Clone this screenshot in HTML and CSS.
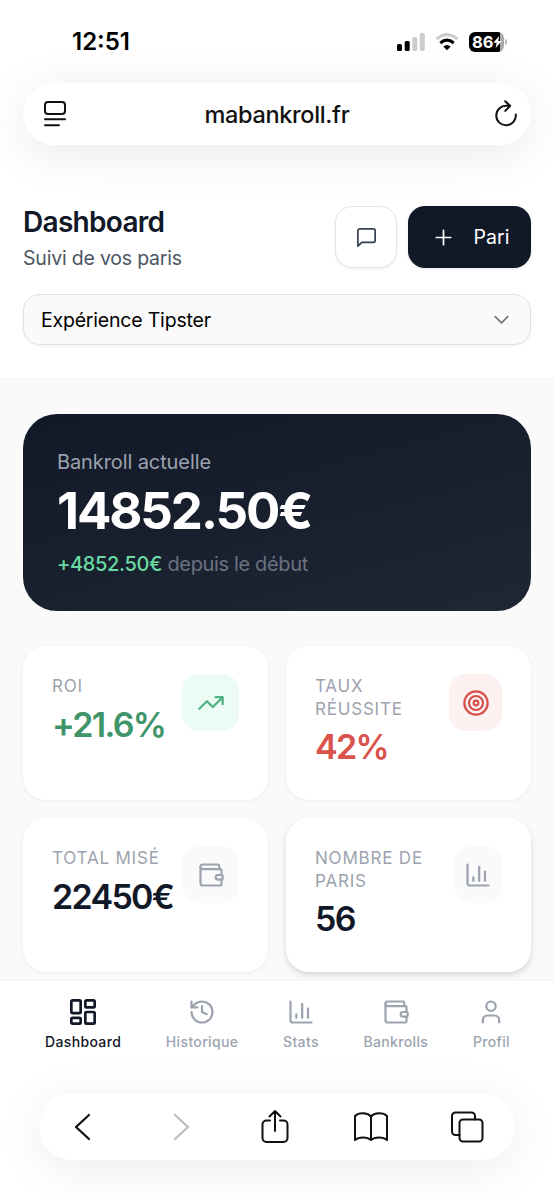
FILE: index.html
```html
<!DOCTYPE html>
<html lang="fr">
<head>
    <meta charset="UTF-8">
    <meta name="viewport" content="width=device-width, initial-scale=1.0">
    <title>Dashboard</title>
    <link rel="stylesheet" href="styles.css">
</head>
<body>

    <svg class="sprite" width="0" height="0">
        <symbol id="wallet" viewBox="0 0 24 24">
            <path d="M19 7V4a1 1 0 0 0-1-1H5a2 2 0 0 0 0 4h15a1 1 0 0 1 1 1v4h-3a2 2 0 0 0 0 4h3a1 1 0 0 0 1-1v-2a1 1 0 0 0-1-1"/>
            <path d="M3 5v14a2 2 0 0 0 2 2h15a1 1 0 0 0 1-1v-4"/>
        </symbol>
        <symbol id="chart" viewBox="0 0 24 24">
            <path d="M3 3v16a2 2 0 0 0 2 2h16M18 17V9M13 17V5M8 17v-3"/>
        </symbol>
    </svg>

    <div class="top">
        <div class="status">
            <span class="time">12:51</span>
            <div class="status-icons">
                <svg width="28" height="18" viewBox="0 0 28 18">
                    <rect x="0" y="11" width="5" height="7" rx="1.6"/>
                    <rect x="7.7" y="8" width="5" height="10" rx="1.6"/>
                    <rect x="15.3" y="4" width="5" height="14" rx="1.6" fill="#ccc"/>
                    <rect x="22.8" y="0" width="5" height="18" rx="1.6" fill="#ccc"/>
                </svg>
                <svg width="24" height="18" viewBox="0 0 24 18">
                    <path d="M1.5 6.2Q12-3 22.5 6.2" fill="none" stroke="#ccc" stroke-width="3.1"/>
                    <path d="M5.3 10Q12 4.2 18.7 10" fill="none" stroke="#000" stroke-width="3.1"/>
                    <path d="M8.3 13.4Q12 10.4 15.7 13.4L12 17.3z"/>
                </svg>
                <div class="battery">
                    <span>86</span>
                    <svg width="9" height="12" viewBox="0 0 9 12"><path d="M6.2 0L.3 6.8h3.3L2.7 12 8.7 5H5.3z" fill="#fff"/></svg>
                </div>
            </div>
        </div>
        <div class="url-bar">
            <svg class="ink" width="24" height="28" viewBox="0 0 24 28">
                <rect x="2" y="2" width="20" height="12" rx="3"/>
                <path d="M2 19.2h20M2 25.2h14"/>
            </svg>
            <span>mabankroll.fr</span>
            <svg class="ink" width="24" height="28" viewBox="0 0 24 28">
                <path d="M21.8 14.5a9.8 9.8 0 1 1-9.3-8.8h3.6M11.2 1.2l5 4.7-5 5"/>
            </svg>
        </div>
    </div>

    <header>
        <div class="title-row">
            <div>
                <h1>Dashboard</h1>
                <p class="subtitle">Suivi de vos paris</p>
            </div>
            <div class="actions">
                <button class="btn-chat">
                    <svg width="23" height="23" viewBox="0 0 24 24"><path d="M21 15a2 2 0 0 1-2 2H7l-4 4V5a2 2 0 0 1 2-2h14a2 2 0 0 1 2 2z"/></svg>
                </button>
                <button class="btn-pari">
                    <svg width="23" height="23" viewBox="0 0 24 24"><path d="M4.5 12h15M12 4.5v15"/></svg>
                    <span>Pari</span>
                </button>
            </div>
        </div>
        <div class="select">
            <span>Expérience Tipster</span>
            <svg width="23" height="23" viewBox="0 0 24 24"><path d="M5.5 9l6.5 6.5L18.5 9"/></svg>
        </div>
    </header>

    <main>
        <section class="hero">
            <p class="hero-label">Bankroll actuelle</p>
            <p class="hero-value">14852.50€</p>
            <p class="hero-diff"><span class="gain">+4852.50€</span> <span class="since">depuis le début</span></p>
        </section>

        <section class="cards">
            <div class="card">
                <div>
                    <p class="label">ROI</p>
                    <p class="value green">+21.6%</p>
                </div>
                <div class="badge badge-green">
                    <svg width="28" height="28" viewBox="0 0 24 24"><path d="M16 7h6v6M22 7l-8.5 8.5-5-5L2 17"/></svg>
                </div>
            </div>
            <div class="card">
                <div>
                    <p class="label">TAUX<br>RÉUSSITE</p>
                    <p class="value red">42%</p>
                </div>
                <div class="badge badge-red">
                    <svg width="28" height="28" viewBox="0 0 24 24"><circle cx="12" cy="12" r="10"/><circle cx="12" cy="12" r="6"/><circle cx="12" cy="12" r="2"/></svg>
                </div>
            </div>
            <div class="card">
                <div>
                    <p class="label">TOTAL MISÉ</p>
                    <p class="value">22450€</p>
                </div>
                <div class="badge">
                    <svg width="28" height="28"><use href="#wallet"/></svg>
                </div>
            </div>
            <div class="card card-active">
                <div>
                    <p class="label">NOMBRE DE<br>PARIS</p>
                    <p class="value">56</p>
                </div>
                <div class="badge badge-small">
                    <svg width="28" height="28"><use href="#chart"/></svg>
                </div>
            </div>
        </section>
    </main>

    <nav>
        <a class="active">
            <svg width="28" height="28" viewBox="0 0 24 24"><rect x="2" y="2" width="8" height="11" rx="1"/><rect x="14" y="2" width="8" height="6" rx="1"/><rect x="14" y="12" width="8" height="10" rx="1"/><rect x="2" y="17" width="8" height="5" rx="1"/></svg>
            <span>Dashboard</span>
        </a>
        <a>
            <svg width="28" height="28" viewBox="0 0 24 24"><path d="M3 12a9 9 0 1 0 9-9 9.75 9.75 0 0 0-6.74 2.74L3 8"/><path d="M3 3v5h5M12 7v5l4 2"/></svg>
            <span>Historique</span>
        </a>
        <a>
            <svg width="28" height="28"><use href="#chart"/></svg>
            <span>Stats</span>
        </a>
        <a>
            <svg width="28" height="28"><use href="#wallet"/></svg>
            <span>Bankrolls</span>
        </a>
        <a>
            <svg width="28" height="28" viewBox="0 0 24 24"><path d="M19 21v-2a4 4 0 0 0-4-4H9a4 4 0 0 0-4 4v2"/><circle cx="12" cy="7" r="4"/></svg>
            <span>Profil</span>
        </a>
    </nav>

    <div class="toolbar-wrap">
        <div class="toolbar">
            <svg class="ink bold" width="36" height="36" viewBox="0 0 36 36"><path d="M24 6L11 18l13 12"/></svg>
            <svg class="ink bold dim" width="36" height="36" viewBox="0 0 36 36"><path d="M14 6l13 12-13 12"/></svg>
            <svg class="ink" width="36" height="36" viewBox="0 0 36 36"><path d="M13 11.5H9.5a4 4 0 0 0-4 4V29a4 4 0 0 0 4 4h17a4 4 0 0 0 4-4V15.5a4 4 0 0 0-4-4H23M18 22V2.500M12.5 7.500L18 2l5.500 5.500"/></svg>
            <svg class="ink" width="36" height="36" viewBox="0 0 36 36"><path d="M18 7.500C14.500 3.500 6 3 2 7v24c4-3.500 12-3.500 16 0 4-3.500 12-3.500 16 0V7c-4-4-12.500-3.500-16 .5zM18 7.500V31"/></svg>
            <svg class="ink" width="36" height="36" viewBox="0 0 36 36"><rect x="10.5" y="10.5" width="23" height="22" rx="3.5"/><path d="M10.5 26h-4A3.500 3.500 0 0 1 3 22.500V7a3.500 3.500 0 0 1 3.500-3.500h16A3.500 3.500 0 0 1 26 7v3.500"/></svg>
        </div>
    </div>

</body>
</html>
```

FILE: styles.css
```css
* { box-sizing: border-box; margin: 0; padding: 0; }
body { width: 554px; height: 1200px; overflow: hidden; background: #fff; font-family: Inter, sans-serif; color: #111827; display: flex; flex-direction: column; }
svg { flex-shrink: 0; }
.sprite { position: absolute; }
button { border: none; font-family: inherit; }

.ink { fill: none; stroke: #111; stroke-width: 2; stroke-linecap: round; stroke-linejoin: round; }
.bold { stroke-width: 2.3; }
.dim { stroke: #bbb; }

/* status bar and address bar */
.top { height: 206px; flex-shrink: 0; overflow: hidden; background: #fff; }
.status { height: 83px; padding: 0 50px 0 72px; display: flex; align-items: center; justify-content: space-between; }
.time { font-size: 24px; font-weight: 600; color: #000; }
.status-icons { display: flex; align-items: center; gap: 10px; }
.battery { position: relative; width: 35px; height: 20px; border-radius: 6px; background: linear-gradient(90deg, #000 31px, #aaa 31px); display: flex; align-items: center; padding-left: 3px; color: #fff; font-size: 16.5px; font-weight: 700; }
.battery::after { content: ""; position: absolute; left: 36px; top: 7px; width: 2px; height: 6px; border-radius: 0 2px 2px 0; background: #bbb; }
.url-bar { height: 62px; margin: 0 23px; padding: 0 13px 0 20px; border-radius: 31px; background: #fff; box-shadow: 0 8px 50px rgba(0, 0, 0, 0.09); display: flex; align-items: center; justify-content: space-between; font-size: 23.5px; font-weight: 450; color: #111; letter-spacing: -0.35px; }
.url-bar span { margin-left: -7px; }

/* page header */
header { height: 173px; flex-shrink: 0; padding: 0 23px; border-bottom: 1px solid #f4f4f5; }
.title-row { display: flex; justify-content: space-between; height: 62px; }
h1 { font-size: 28px; line-height: 32px; font-weight: 600; letter-spacing: -0.7px; }
.subtitle { margin-top: 6px; font-size: 19.5px; line-height: 28px; color: #4b5563; letter-spacing: -0.2px; }
.actions { display: flex; gap: 11px; }
.actions button { height: 62px; border-radius: 17px; display: flex; align-items: center; justify-content: center; }
.actions svg, .select svg { fill: none; stroke: currentColor; stroke-width: 1.8; stroke-linecap: round; stroke-linejoin: round; }
.actions .btn-chat { width: 62px; background: #fff; border: 1px solid #e2e4ea; color: #374151; box-shadow: 0 1px 3px rgba(0, 0, 0, 0.07); }
.btn-pari { width: 123px; padding-left: 2px; gap: 19px; background: #111827; color: #fff; font-size: 19.5px; box-shadow: 0 1px 3px rgba(0, 0, 0, 0.1); }
.select { margin-top: 26px; height: 51px; padding: 0 17px; border: 1px solid #dfe1e8; border-radius: 17px; background: #fafafb; box-shadow: 0 1px 3px rgba(0, 0, 0, 0.06); display: flex; align-items: center; justify-content: space-between; font-size: 19.5px; letter-spacing: -0.2px; color: #000; }
.select svg { color: #777; }

/* bankroll + stats */
main { height: 601px; flex-shrink: 0; overflow: hidden; padding: 35px 23px 0; background: #fafafb; }
.hero { height: 197px; padding: 34px; border-radius: 34px; background: linear-gradient(165deg, #111827, #1f2735); }
.hero-label { font-size: 20px; line-height: 28px; color: #9ca3af; letter-spacing: -0.1px; }
.hero-value { margin-top: 6px; font-size: 51px; line-height: 57px; font-weight: 700; color: #fff; letter-spacing: -2.1px; }
.hero-diff { margin-top: 11px; font-size: 20px; line-height: 28px; letter-spacing: -0.35px; white-space: nowrap; }
.gain { color: #68dba2; font-weight: 500; }
.since { color: #6b7280; }

.cards { margin-top: 35px; display: grid; grid-template-columns: 245px 245px; justify-content: space-between; row-gap: 18px; }
.card { height: 154px; padding: 28px 29px 0; border-radius: 23px; background: #fff; box-shadow: 0 1px 4px rgba(30, 30, 90, 0.06); display: flex; justify-content: space-between; }
.card-active { box-shadow: 0 3px 6px rgba(0, 0, 0, 0.14); }
.label { margin-top: 1px; font-size: 17px; line-height: 22.5px; color: #9ca3af; letter-spacing: 0.8px; white-space: nowrap; }
.value { font-size: 34px; line-height: 40px; margin-top: 7px; font-weight: 600; letter-spacing: -1.7px; white-space: nowrap; }
.green { color: #3f946a; }
.red { color: #d9524c; }
.badge { width: 57px; height: 57px; margin-left: -20px; border-radius: 17px; background: #fafafa; color: #9ca3af; display: flex; align-items: center; justify-content: center; }
.badge-green { background: #ecfbf4; color: #4fb184; }
.badge-red { width: 53px; background: #fcf0f0; color: #d6504c; }
.badge-small { width: 48px; }
.badge svg, nav svg { fill: none; stroke: currentColor; stroke-width: 1.9; stroke-linecap: round; stroke-linejoin: round; }

/* tab bar */
nav { height: 76px; flex-shrink: 0; padding: 17px 44px 0 45px; border-top: 1px solid #f4f4f5; display: flex; justify-content: space-between; }
nav a { display: flex; flex-direction: column; align-items: center; color: #9ca3af; font-size: 14px; font-weight: 450; letter-spacing: 0.35px; }
nav span { margin-top: 7px; line-height: 17px; }
nav .active { color: #111827; }
nav .active svg { stroke-width: 2.3; }

/* browser toolbar */
.toolbar-wrap { height: 144px; flex-shrink: 0; overflow: hidden; padding: 37px 39px 0; }
.toolbar { height: 67px; padding: 0 30px 0 26px; border-radius: 34px; background: #fff; box-shadow: 0 8px 50px rgba(0, 0, 0, 0.08); display: flex; align-items: center; justify-content: space-between; }
```
